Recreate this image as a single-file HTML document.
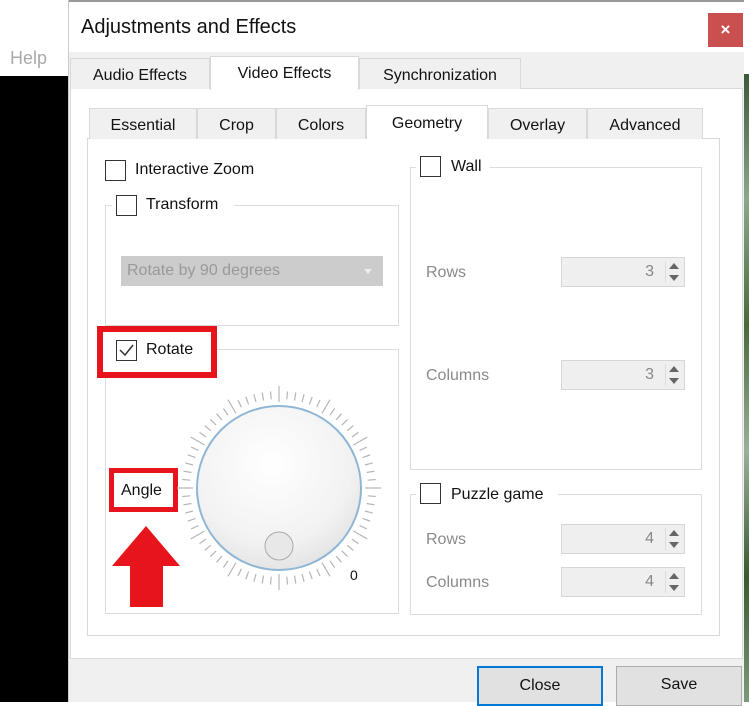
<!DOCTYPE html>
<html><head><meta charset="utf-8"><style>
*{margin:0;padding:0;box-sizing:border-box}
body{width:749px;height:702px;position:relative;overflow:hidden;background:#fff;font-family:"Liberation Sans",sans-serif;font-size:16px;color:#111}
.a{position:absolute}
.tab{position:absolute;background:#f0f0f0;border:1px solid #d9d9d9;border-bottom:none;text-align:center;font-size:16px}
.tab.on{background:#fff}
.cb{position:absolute;width:21px;height:21px;border:1.5px solid #333;background:#fff}
.grp{position:absolute;border:1px solid #dcdcdc}
.lbl{position:absolute;background:#fff;padding:0 3px}
.gray{color:#8a8a8a}
.spin{position:absolute;width:124px;height:30px;background:#efefef;border:1px solid #d6d6d6;color:#888;text-align:right;padding-right:30px;line-height:28px}
.spin i{position:absolute;right:3px;top:3px;width:16px;height:22px;border-left:1px solid #ddd}
.spin i:before{content:"";position:absolute;left:3px;top:2px;border:5px solid transparent;border-bottom:6px solid #666;border-top:none}
.spin i:after{content:"";position:absolute;left:3px;bottom:2px;border:5px solid transparent;border-top:6px solid #666;border-bottom:none}
.btn{position:absolute;top:666px;height:40px;background:#e1e1e1;border:1px solid #adadad;text-align:center;line-height:36px;font-size:16px}
</style></head><body>
<div class="a" style="left:0;top:76px;width:70px;height:626px;background:#000"></div>
<div class="a gray" style="left:10px;top:48px;font-size:18px;color:#aaa">Help</div>
<div class="a" style="left:744px;top:74px;width:5px;height:628px;background:linear-gradient(#3a5a3a,#8aa88a 20%,#4a6a3a 40%,#9ab09a 60%,#3a5a30 80%,#7a9a7a)"></div>
<div class="a" style="left:68px;top:0;width:676px;height:702px;background:#f0f0f0;border-left:1px solid #ccc"></div>
<div class="a" style="left:69px;top:0;width:675px;height:52px;background:#fff;border-top:2px solid #999"></div>
<div class="a" style="left:81px;top:16px;font-size:20px">Adjustments and Effects</div>
<div class="a" style="left:708px;top:13px;width:35px;height:34px;background:#c9504f;color:#fff;text-align:center;line-height:33px;font-size:17px;font-weight:bold">×</div>
<div class="a" style="left:70px;top:88px;width:673px;height:571px;background:#fff;border:1px solid #dadada"></div>
<div class="tab" style="left:70px;top:58px;width:140px;height:31px;line-height:33px">Audio Effects</div>
<div class="tab on" style="left:210px;top:56px;width:149px;height:34px;line-height:33px">Video Effects</div>
<div class="tab" style="left:359px;top:58px;width:162px;height:31px;line-height:33px">Synchronization</div>
<div class="a" style="left:87px;top:138px;width:633px;height:498px;background:#fff;border:1px solid #d9d9d9"></div>
<div class="tab" style="left:89px;top:108px;width:108px;height:31px;line-height:33px">Essential</div>
<div class="tab" style="left:197px;top:108px;width:79px;height:31px;line-height:33px">Crop</div>
<div class="tab" style="left:276px;top:108px;width:90px;height:31px;line-height:33px">Colors</div>
<div class="tab on" style="left:366px;top:105px;width:122px;height:34px;line-height:35px">Geometry</div>
<div class="tab" style="left:488px;top:108px;width:99px;height:31px;line-height:33px">Overlay</div>
<div class="tab" style="left:587px;top:108px;width:116px;height:31px;line-height:33px">Advanced</div>

<div class="cb" style="left:105px;top:160px"></div>
<div class="a" style="left:135px;top:161px">Interactive Zoom</div>
<div class="grp" style="left:105px;top:205px;width:294px;height:121px"></div>
<div class="lbl" style="left:112px;top:194px;width:122px;height:22px"></div>
<div class="cb" style="left:116px;top:195px"></div>
<div class="a" style="left:146px;top:196px">Transform</div>
<div class="a" style="left:121px;top:256px;width:262px;height:30px;background:#ccc;color:#999;padding-left:6px;line-height:30px">Rotate by 90 degrees</div>
<div class="a" style="left:364px;top:269px;border:4px solid transparent;border-top:5px solid #eee"></div>

<div class="grp" style="left:105px;top:349px;width:294px;height:265px"></div>
<div class="a" style="left:97px;top:326px;width:120px;height:52px;border:6px solid #e8141c;background:#fff"></div>
<div class="cb" style="left:116px;top:340px"></div>
<svg class="a" style="left:116px;top:340px" width="21" height="21"><path d="M4 10 L9 15 L17 5" fill="none" stroke="#333" stroke-width="1.5"/></svg>
<div class="a" style="left:146px;top:341px">Rotate</div>
<div class="a" style="left:109px;top:468px;width:69px;height:44px;border:5px solid #e8141c;background:#fff"></div>
<div class="a" style="left:121px;top:482px;font-size:16px">Angle</div>
<svg class="a" style="left:0;top:0" width="749" height="702">
<polygon points="112,566 146,526 180,566 163,566 163,607 130,607 130,566" fill="#e8141c"/>
<g id="ticks" stroke="#b5b5b5" stroke-width="1.2"></g>
<defs><radialGradient id="kg" cx="0.45" cy="0.35" r="0.7"><stop offset="0" stop-color="#ffffff"/><stop offset="0.7" stop-color="#f2f2f2"/><stop offset="1" stop-color="#e0e0e0"/></radialGradient></defs>
<circle cx="279" cy="488" r="82" fill="url(#kg)" stroke="#8fb6d6" stroke-width="2"/>
<circle cx="279" cy="546" r="14" fill="#e8e8e8" stroke="#aaa" stroke-width="1"/>
<text x="350" y="580" font-family="Liberation Sans" font-size="14" fill="#111">0</text>
</svg>

<div class="grp" style="left:410px;top:167px;width:292px;height:303px"></div>
<div class="lbl" style="left:416px;top:156px;width:74px;height:22px"></div>
<div class="cb" style="left:420px;top:156px"></div>
<div class="a" style="left:451px;top:158px">Wall</div>
<div class="a gray" style="left:426px;top:264px">Rows</div>
<div class="spin" style="left:561px;top:257px">3<i></i></div>
<div class="a gray" style="left:426px;top:367px">Columns</div>
<div class="spin" style="left:561px;top:360px">3<i></i></div>

<div class="grp" style="left:410px;top:494px;width:292px;height:121px"></div>
<div class="lbl" style="left:416px;top:483px;width:142px;height:22px"></div>
<div class="cb" style="left:420px;top:483px"></div>
<div class="a" style="left:451px;top:486px">Puzzle game</div>
<div class="a gray" style="left:426px;top:531px">Rows</div>
<div class="spin" style="left:561px;top:524px">4<i></i></div>
<div class="a gray" style="left:426px;top:574px">Columns</div>
<div class="spin" style="left:561px;top:567px">4<i></i></div>

<div class="btn" style="left:477px;width:126px;border:2px solid #0078d7">Close</div>
<div class="btn" style="left:616px;width:126px">Save</div>
<script>
var g=document.getElementById('ticks'),s='';
for(var i=0;i<72;i++){var a=i*5*Math.PI/180,L=(i%6==0),r1=L?86:89,r2=L?102:97;
s+='<line x1="'+(279+r1*Math.sin(a)).toFixed(1)+'" y1="'+(488-r1*Math.cos(a)).toFixed(1)+'" x2="'+(279+r2*Math.sin(a)).toFixed(1)+'" y2="'+(488-r2*Math.cos(a)).toFixed(1)+'"/>';}
g.innerHTML=s;
</script>
</body></html>
